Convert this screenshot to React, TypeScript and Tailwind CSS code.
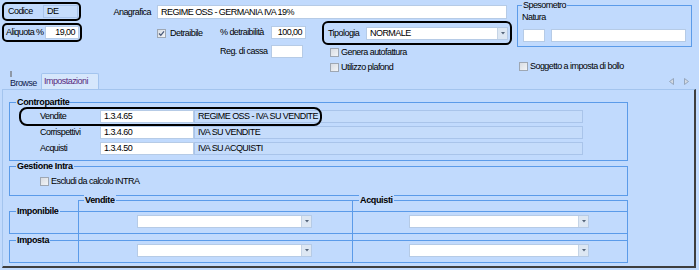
import React from "react";

const BG = "bg-[#c1dafd]";

function Check({ checked = false }: { checked?: boolean }) {
  return (
    <span className="flex h-[9px] w-[9px] shrink-0 items-center justify-center border border-[#9ea7b3] bg-gradient-to-br from-[#d9dde3] to-[#f2f4f7]">
      {checked && (
        <svg width="7" height="7" viewBox="0 0 7 7">
          <path d="M1 3.5 L2.8 5.3 L6 1.3" fill="none" stroke="#4a5b7c" strokeWidth="1.3" />
        </svg>
      )}
    </span>
  );
}

function Field({ w, value = "", right = false, ro = false, h = "h-[13px]" }: { w: string; value?: string; right?: boolean; ro?: boolean; h?: string }) {
  return (
    <div
      className={`${w} ${h} flex shrink-0 items-center border px-[3px] ${
        ro ? "border-[#a9c4ea] bg-[#c5dcfb]" : "border-[#b6cbe6] bg-white"
      } ${right ? "justify-end" : ""}`}
    >
      <span className="whitespace-nowrap leading-none">{value}</span>
    </div>
  );
}

function Combo({ w, value = "" }: { w: string; value?: string }) {
  return (
    <div className={`${w} flex h-[13px] shrink-0 items-stretch border border-[#b6cbe6] bg-white`}>
      <span className="flex flex-1 items-center pl-[3px] leading-none">{value}</span>
      <span className="flex w-[10px] items-center justify-center border-l border-[#c5d4e6] bg-[#dde7f3]">
        <svg width="4" height="3" viewBox="0 0 4 3">
          <path d="M0 0 H4 L2 2.5 Z" fill="#55657a" />
        </svg>
      </span>
    </div>
  );
}

function Group({ legend, className = "", legendLeft = "left-[6px]", bold = true, children }: { legend: string; className?: string; legendLeft?: string; bold?: boolean; children?: React.ReactNode }) {
  return (
    <div className={`border border-[#5b9be9] ${className}`}>
      <span
        className={`absolute ${legendLeft} top-[-6px] ${BG} px-[1px] leading-[10px] ${
          bold ? "font-bold tracking-[-0.35px]" : ""
        }`}
      >
        {legend}
      </span>
      {children}
    </div>
  );
}

export default function App() {
  return (
    <div className={`relative h-[270px] w-[699px] overflow-hidden ${BG} font-['Liberation_Sans',Arial,sans-serif] text-[9px] tracking-[-0.55px] text-black`}>
      {/* Header fields */}
      <div className="flex h-[70px]">
        <div className="ml-[2px] mt-[2px] flex shrink-0 flex-col gap-[2px]">
          <div className="flex h-[19px] w-[79px] items-center rounded-[5px] border-2 border-black">
            <span className="w-[39px] pl-[4px] leading-none">Codice</span>
            <Field w="w-[35px]" value="DE" ro />
          </div>
          <div className="flex h-[19px] w-[80px] items-center rounded-[5px] border-2 border-black">
            <span className="w-[41px] pl-[2px] leading-none">Aliquota %</span>
            <Field w="w-[34px]" value="19,00" right />
          </div>
        </div>

        <div className="ml-[27px] flex w-[408px] shrink-0 flex-col">
          <div className="mt-[5px] flex h-[14px] items-center">
            <span className="w-[42px] whitespace-nowrap text-right leading-none">Anagrafica</span>
            <Field w="w-[350px] ml-[6px]" h="h-[14px]" value="REGIME OSS - GERMANIA IVA 19%" />
          </div>

          <div className="mt-[2px] flex">
            <div className="ml-[48px] w-[63px] shrink-0 pt-[8px]">
              <div className="flex items-center gap-[4px]">
                <Check checked />
                <span className="leading-none">Detraibile</span>
              </div>
            </div>

            <div className="flex w-[86px] shrink-0 flex-col">
              <div className="mt-[5px] flex h-[13px] items-center">
                <span className="w-[51px] whitespace-nowrap leading-none">% detraibilità</span>
                <Field w="w-[35px]" value="100,00" right />
              </div>
              <div className="mt-[6px] flex h-[13px] items-center">
                <span className="w-[51px] whitespace-nowrap leading-none">Reg. di cassa</span>
                <Field w="w-[32px]" />
              </div>
            </div>

            <div className="ml-[16px] flex w-[190px] shrink-0 flex-col">
              <div className="flex h-[24px] items-center rounded-[6px] border-2 border-black">
                <span className="w-[42px] pl-[4px] leading-none">Tipologia</span>
                <Combo w="w-[142px]" value="NORMALE" />
              </div>
              <div className="ml-[8px] mt-[3px] flex items-center gap-[2px]">
                <Check />
                <span className="leading-none">Genera autofattura</span>
              </div>
              <div className="ml-[8px] mt-[6px] flex items-center">
                <div className="flex w-[189px] shrink-0 items-center gap-[2px]">
                  <Check />
                  <span className="leading-none">Utilizzo plafond</span>
                </div>
                <div className="-mt-[2px] flex shrink-0 items-center gap-[2px]">
                  <Check />
                  <span className="whitespace-nowrap leading-none">Soggetto a imposta di bollo</span>
                </div>
              </div>
            </div>
          </div>
        </div>

        <Group legend="Spesometro" bold={false} legendLeft="left-[4px]" className="relative mt-[5px] h-[42px] w-[175px] shrink-0">
          <div className="pl-[4px] pt-[7px] leading-none">Natura</div>
          <div className="ml-[5px] mt-[7px] flex gap-[6px]">
            <Field w="w-[22px]" />
            <Field w="w-[135px]" />
          </div>
        </Group>
      </div>

      {/* Tab strip */}
      <div className="relative flex h-[19px] items-end pl-[8px]">
        <span className="absolute left-[10px] top-[1px] h-[6px] w-[2px] border border-[#8e98a6] bg-[#e6e9ee]" />
        <div className="flex h-[12px] w-[33px] items-center pl-[2px] text-[#10204a]">
          <span className="leading-none">Browse</span>
        </div>
        <div className="flex h-[16px] w-[58px] items-center rounded-t-[2px] border border-b-0 border-[#a3c4ee] bg-[#d6e7fc] pl-[2px] text-[#5a2b80]">
          <span className="leading-none">Impostazioni</span>
        </div>
        <div className="mb-[4px] ml-auto mr-[10px] flex gap-[10px]">
          <svg width="5" height="7" viewBox="0 0 5 7">
            <path d="M4.5 0.5 V6.5 L0.5 3.5 Z" fill="#d3dae4" stroke="#8c9aae" strokeWidth="0.8" />
          </svg>
          <svg width="5" height="7" viewBox="0 0 5 7">
            <path d="M0.5 0.5 V6.5 L4.5 3.5 Z" fill="#d3dae4" stroke="#8c9aae" strokeWidth="0.8" />
          </svg>
        </div>
      </div>

      {/* Tab panel */}
      <div className="ml-[2px] h-[179px] w-[694px] border-l border-t border-[#a3c4ee] border-r-2 border-b-2 border-r-[#3e3e3e] border-b-[#3e3e3e] pl-[6px] pt-[12px]">
        <Group legend="Contropartite" className="relative h-[59px] w-[619px]">
          <span className="absolute left-[9px] top-[4px] h-[19px] w-[303px] rounded-[8px] border-2 border-black" />
          <div className="flex flex-col gap-[3px] pl-[30px] pt-[7px]">
            {[
              ["Vendite", "1.3.4.65", "REGIME OSS - IVA SU VENDITE"],
              ["Corrispettivi", "1.3.4.60", "IVA SU VENDITE"],
              ["Acquisti", "1.3.4.50", "IVA SU ACQUISTI"],
            ].map(([label, code, desc]) => (
              <div key={label} className="flex h-[13px] items-center">
                <span className="w-[60px] leading-none">{label}</span>
                <Field w="w-[94px]" value={code} />
                <Field w="w-[389px]" value={desc} ro />
              </div>
            ))}
          </div>
        </Group>

        <Group legend="Gestione Intra" className="relative mt-[5px] h-[30px] w-[619px]">
          <div className="flex items-center gap-[2px] pl-[30px] pt-[10px]">
            <Check />
            <span className="leading-none">Escludi da calcolo INTRA</span>
          </div>
        </Group>

        <div className="relative w-[619px] pt-[15px]">
          <Group legend="Imponibile" className="relative h-[23px] w-[619px]">
            <div className="flex pl-[127px] pt-[3px]">
              <Combo w="w-[175px]" />
              <Combo w="w-[180px] ml-[97px]" />
            </div>
          </Group>
          <Group legend="Imposta" className="relative mt-[6px] h-[23px] w-[619px]">
            <div className="flex pl-[127px] pt-[3px]">
              <Combo w="w-[175px]" />
              <Combo w="w-[180px] ml-[97px]" />
            </div>
          </Group>
          <Group legend="Vendite" legendLeft="left-[5px]" className="absolute left-[69px] top-[4px] h-[63px] w-[275px] border-r-0 border-b-0" />
          <Group legend="Acquisti" legendLeft="left-[6px]" className="absolute left-[343px] top-[4px] h-[63px] w-[276px] border-b-0" />
        </div>
      </div>
    </div>
  );
}
